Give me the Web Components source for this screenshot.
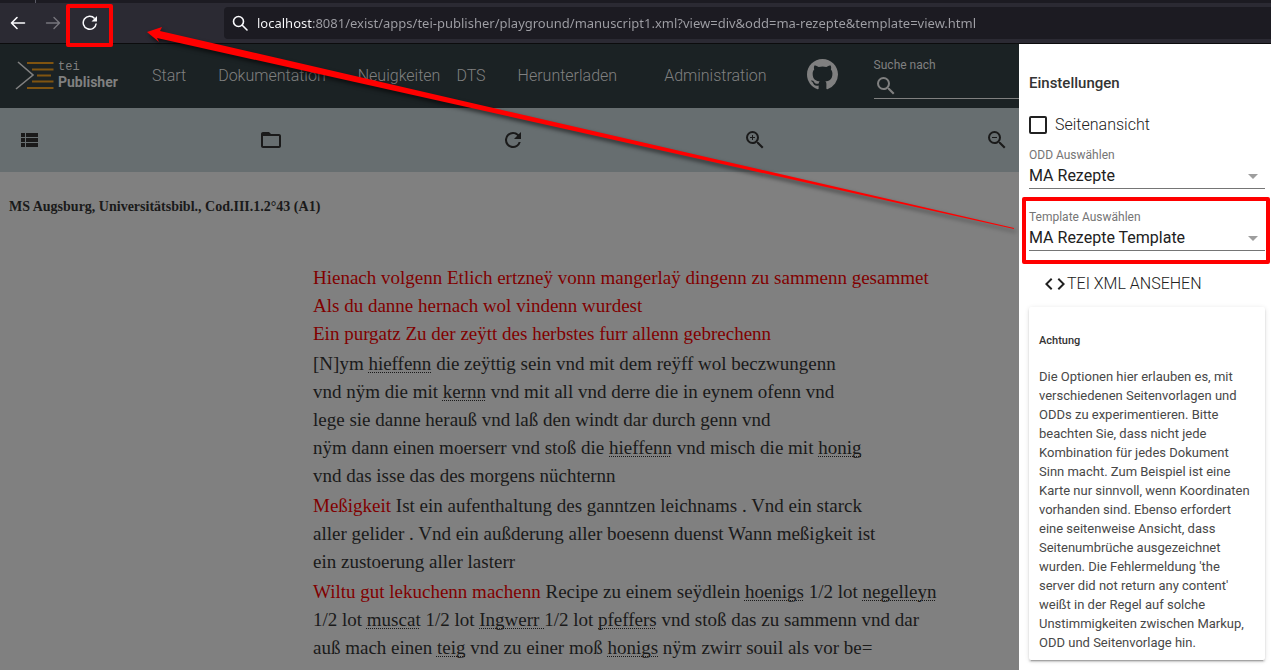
<!DOCTYPE html>
<html lang="de">
<head>
<meta charset="utf-8">
<title>TEI Publisher – MA Rezepte</title>
<style>
html, body { margin: 0; height: 100%; }
body { font: 16px/24px Roboto, sans-serif; background: #808080; overflow: hidden; }
</style>
</head>
<body>
<demo-window></demo-window>

<template id="t-window">
<style>
:host { display: flex; flex-direction: column; height: 100vh; position: relative; overflow: hidden; }
.page { display: flex; flex: 1; min-height: 0; }
main { flex: 1; min-width: 0; background: #808080; overflow: hidden; }
.arrow { position: absolute; left: 0; top: 0; pointer-events: none; filter: drop-shadow(2px 3px 2px rgba(0,0,0,.6)); }
</style>
<browser-bar></browser-bar>
<div class="page">
  <main>
    <app-header></app-header>
    <view-toolbar></view-toolbar>
    <manuscript-view></manuscript-view>
  </main>
  <settings-drawer></settings-drawer>
</div>
<svg class="arrow" width="1024" height="240" aria-hidden="true"><path fill="#f00" d="M147 32 162 27 160 31 1014 228V229L157 38 159 42Z"/></svg>
</template>

<template id="t-browser">
<style>
:host { display: block; background: #2b2a33; border-bottom: 1px solid #0c0c0d; }
.tabs { height: 3px; background: #1c1b22; padding-left: 35px; }
.tabs i { display: block; width: 1px; height: 3px; background: #5b5b66; }
.bar { display: flex; align-items: center; height: 40px; }
button { position: relative; border: 0; padding: 0; background: none; width: 35px; height: 32px; display: grid; place-items: center; color: #fbfbfe; }
button.off { color: #77767d; }
button.reload { margin-left: 2px; }
.mark { position: absolute; inset: -3px -6px -8px -6px; border: 4px solid #f00; border-radius: 2px; z-index: 2; }
.url { flex: 1; display: flex; align-items: center; gap: 9px; height: 32px; margin-left: 117px; padding-left: 8px; background: #1c1b22; border-radius: 4px 0 0 4px; color: #fbfbfe; }
input { flex: 1; border: 0; outline: 0; padding: 0; height: 24px; font: 13px/24px "Noto Sans", sans-serif;
  color: transparent; background: linear-gradient(90deg, #fbfbfe 56px, #a0a0a6 56px); -webkit-background-clip: text; background-clip: text; }
</style>
<div class="tabs"><i></i></div>
<div class="bar">
  <button aria-label="Zurück"><svg width="16" height="16" viewBox="0 0 16 16" fill="none" stroke="currentColor" stroke-width="1.600" stroke-linecap="round" stroke-linejoin="round"><path d="M14.500 8H1.500M7 2.500 1.500 8 7 13.500"/></svg></button>
  <button class="off" aria-label="Vor"><svg width="16" height="16" viewBox="0 0 16 16" fill="none" stroke="currentColor" stroke-width="1.400" stroke-linecap="round" stroke-linejoin="round"><path d="M1.500 8H14.500M9 2.500 14.500 8 9 13.500"/></svg></button>
  <button class="reload" aria-label="Neu laden"><svg width="16" height="16" viewBox="0 0 16 16" fill="none" stroke="currentColor" stroke-width="1.500"><path d="M14.200 8.500A6.500 6.500 0 1 1 12.600 3.400"/><path fill="currentColor" stroke="none" d="M15 1V6.500H9.500Z"/></svg><span class="mark"></span></button>
  <div class="url">
    <svg width="16" height="16" viewBox="0 0 16 16" fill="none" stroke="currentColor" stroke-width="1.600" stroke-linecap="round"><circle cx="6.500" cy="6.500" r="5"/><path d="M10.300 10.300 15 15"/></svg>
    <input aria-label="Adresse" value="localhost:8081/exist/apps/tei-publisher/playground/manuscript1.xml?view=div&amp;odd=ma-rezepte&amp;template=view.html">
  </div>
</div>
</template>

<template id="t-header">
<style>
:host { display: flex; align-items: center; height: 64px; background: #1b2224; color: #808080; padding-left: 15px; white-space: nowrap; }
a { color: inherit; text-decoration: none; }
.logo { display: flex; align-items: center; gap: 4px; width: 121px; }
.logo svg { flex: none; }
.logo b { display: grid; font: 700 14px/18px Roboto, sans-serif; }
.logo small { font: 12px/12px "Liberation Mono", monospace; }
nav { display: flex; font-weight: 300; }
nav a { padding: 0 16px; }
nav a.tight { padding-right: 0; }
nav a.wide { padding-left: 31px; padding-right: 24px; }
.git { display: flex; margin: -3px 20px 0 16px; }
.search { flex: 1; align-self: flex-start; margin: 12px 0 0 16px; border-bottom: 1px solid #808080; min-width: 100px; }
label { display: block; font-size: 12px; line-height: 18px; }
.field { display: flex; height: 24px; align-items: flex-start; }
input { flex: 1; min-width: 0; border: 0; outline: 0; background: none; color: inherit; }
</style>
<a class="logo" href="#"><svg width="39" height="30" viewBox="0 0 39 30" fill="none"><path stroke="#808080" stroke-width="1.600" d="M3 1 18 14 1 28"/><path stroke="#805410" stroke-width="1.800" d="M12 2H38.500M17 8.500H38.500M22 14.500H36M17 20.500H38.500M12 27H38.500"/></svg><b><small>tei</small>Publisher</b></a>
<nav>
  <a href="#">Start</a><a href="#">Dokumentation</a><a class="tight" href="#">Neuigkeiten</a><a href="#">DTS</a><a href="#">Herunterladen</a><a class="wide" href="#">Administration</a>
</nav>
<a class="git" href="#" aria-label="GitHub"><svg width="31" height="31" viewBox="0 0 16 16" fill="#808080"><path d="M8 0C3.580 0 0 3.580 0 8c0 3.540 2.290 6.530 5.470 7.590.4.070.55-.17.55-.38 0-.19-.01-.82-.01-1.490-2.010.37-2.530-.49-2.690-.94-.09-.23-.48-.94-.82-1.130-.28-.15-.68-.52-.01-.53.63-.01 1.080.58 1.230.82.72 1.210 1.870.87 2.330.66.07-.52.28-.87.51-1.070-1.780-.2-3.640-.89-3.640-3.950 0-.87.31-1.590.82-2.150-.08-.2-.36-1.020.08-2.120 0 0 .67-.21 2.200.82a7.400 7.400 0 0 1 4 0c1.530-1.040 2.200-.82 2.200-.82.44 1.100.16 1.920.08 2.120.51.56.82 1.270.82 2.150 0 3.070-1.870 3.750-3.650 3.950.29.25.54.73.54 1.480 0 1.070-.01 1.930-.01 2.200 0 .21.15.46.55.38A8 8 0 0 0 16 8c0-4.420-3.580-8-8-8Z"/></svg></a>
<div class="search">
  <label for="q">Suche nach</label>
  <div class="field"><svg width="24" height="24" viewBox="0 0 24 24" fill="#808080"><path d="M15.500 14h-.79l-.28-.27A6.470 6.470 0 0 0 16 9.500 6.500 6.500 0 1 0 9.500 16c1.610 0 3.090-.59 4.230-1.570l.27.28v.79l5 4.990L20.490 19l-4.990-5zm-6 0C7.010 14 5 11.990 5 9.500S7.010 5 9.500 5 14 7.010 14 9.500 11.990 14 9.500 14z"/></svg><input id="q" type="search"></div>
</div>
</template>

<template id="t-toolbar">
<style>
:host { display: flex; align-items: center; justify-content: space-between; height: 64px; padding: 0 10px 0 17px; background: #676e70; }
button { border: 0; padding: 0; background: none; width: 24px; height: 24px; }
svg { display: block; fill: #1a1a1a; }
</style>
<button aria-label="Inhalt"><svg width="24" height="24"><path d="M4 14h4v-4H4v4zm0 5h4v-4H4v4zM4 9h4V5H4v4zm5 5h12v-4H9v4zm0 5h12v-4H9v4zM9 5v4h12V5H9z"/></svg></button>
<button aria-label="Ordner"><svg width="24" height="24"><path d="M20 6h-8l-2-2H4c-1.100 0-1.990.9-1.990 2L2 18c0 1.100.9 2 2 2h16c1.100 0 2-.9 2-2V8c0-1.100-.9-2-2-2zm0 12H4V8h16v10z"/></svg></button>
<button aria-label="Aktualisieren"><svg width="24" height="24"><path d="M17.650 6.350A7.958 7.958 0 0 0 12 4a8 8 0 1 0 7.730 10h-2.080A5.990 5.990 0 0 1 12 18a6 6 0 1 1 0-12c1.660 0 3.140.69 4.220 1.780L13 11h7V4l-2.350 2.350z"/></svg></button>
<button aria-label="Vergrößern"><svg width="24" height="24"><path d="M15.500 14h-.79l-.28-.27A6.470 6.470 0 0 0 16 9.500 6.500 6.500 0 1 0 9.500 16c1.610 0 3.090-.59 4.230-1.570l.27.28v.79l5 4.990L20.490 19l-4.990-5zm-6 0C7.010 14 5 11.990 5 9.500S7.010 5 9.500 5 14 7.010 14 9.500 11.990 14 9.500 14zm2.500-4h-2v2H9v-2H7V9h2V7h1v2h2v1z"/></svg></button>
<button aria-label="Verkleinern"><svg width="24" height="24"><path d="M15.500 14h-.79l-.28-.27A6.470 6.470 0 0 0 16 9.500 6.500 6.500 0 1 0 9.500 16c1.610 0 3.090-.59 4.230-1.570l.27.28v.79l5 4.990L20.490 19l-4.990-5zm-6 0C7.010 14 5 11.990 5 9.500S7.010 5 9.500 5 14 7.010 14 9.500 11.990 14 9.500 14zM7 9h5v1H7z"/></svg></button>
</template>

<template id="t-manuscript">
<style>
:host { display: block; color: #1a1a1a; font: 19px/28px "Liberation Serif", serif; white-space: nowrap; }
h1 { margin: 0; padding: 25px 9px 0; font-size: 14px; line-height: 20px; font-weight: 700; }
.text { padding: 47px 0 0 313px; display: grid; gap: 2px; }
</style>
<h1>MS Augsburg, Universitätsbibl., Cod.III.1.2°43 (A1)</h1>
<div class="text">
<div>
<ms-line><ms-rubric>Hienach volgenn Etlich ertzneÿ vonn mangerlaÿ dingenn zu sammenn gesammet</ms-rubric></ms-line>
<ms-line><ms-rubric>Als du danne hernach wol vindenn wurdest</ms-rubric></ms-line>
<ms-line><ms-rubric>Ein purgatz Zu der zeÿtt des herbstes furr allenn gebrechenn</ms-rubric></ms-line>
</div>
<div>
<ms-line>[N]ym <ms-term>hieffenn</ms-term> die zeÿttig sein vnd mit dem reÿff wol beczwungenn</ms-line>
<ms-line>vnd nÿm die mit <ms-term>kernn</ms-term> vnd mit all vnd derre die in eynem ofenn vnd</ms-line>
<ms-line>lege sie danne herauß vnd laß den windt dar durch genn vnd</ms-line>
<ms-line>nÿm dann einen moerserr vnd stoß die <ms-term>hieffenn</ms-term> vnd misch die mit <ms-term>honig</ms-term></ms-line>
<ms-line>vnd das isse das des morgens nüchternn</ms-line>
</div>
<div>
<ms-line><ms-rubric>Meßigkeit</ms-rubric> Ist ein aufenthaltung des ganntzen leichnams . Vnd ein starck</ms-line>
<ms-line>aller gelider . Vnd ein außderung aller boesenn duenst Wann meßigkeit ist</ms-line>
<ms-line>ein zustoerung aller lasterr</ms-line>
</div>
<div>
<ms-line><ms-rubric>Wiltu gut lekuchenn machenn</ms-rubric> Recipe zu einem seÿdlein <ms-term>hoenigs</ms-term> 1/2 lot <ms-term>negelleyn</ms-term></ms-line>
<ms-line>1/2 lot <ms-term>muscat</ms-term> 1/2 lot <ms-term>Ingwerr </ms-term>1/2 lot <ms-term>pfeffers</ms-term> vnd stoß das zu sammenn vnd dar</ms-line>
<ms-line>auß mach einen <ms-term>teig</ms-term> vnd zu einer moß <ms-term>honigs</ms-term> nÿm zwirr souil als vor be=</ms-line>
</div>
</div>
</template>

<template id="t-line"><style>:host { display: block; }</style><slot></slot></template>
<template id="t-rubric"><style>:host { color: #800000; }</style><slot></slot></template>
<template id="t-term"><style>:host { text-decoration: underline dotted 1px; text-underline-offset: 2px; text-decoration-skip-ink: none; }</style><slot></slot></template>

<template id="t-drawer">
<style>
:host { display: block; width: 236px; padding: 0 6px 0 10px; background: #fff; color: #212121; }
h2 { margin: 0; padding: 24px 0 0; font: 500 15px/30px Roboto, sans-serif; color: #333; }
.check { display: flex; align-items: center; gap: 8px; margin-top: 15px; height: 24px; font-weight: 300; }
input { appearance: none; margin: 0; width: 18px; height: 18px; border: 2px solid #212121; border-radius: 2px; }
a { display: flex; align-items: center; margin-top: 21px; padding-left: 14px; color: inherit; text-decoration: none; font-weight: 300; }
</style>
<h2>Einstellungen</h2>
<div class="check"><input type="checkbox" id="v"><label for="v">Seitenansicht</label></div>
<drawer-select label="ODD Auswählen" value="MA Rezepte"></drawer-select>
<drawer-select label="Template Auswählen" value="MA Rezepte Template" marked></drawer-select>
<a href="#"><svg width="24" height="24" viewBox="0 0 24 24" fill="#212121"><path d="M9.400 16.600 4.800 12l4.600-4.600L8 6l-6 6 6 6 1.400-1.400zm5.200 0 4.600-4.600-4.600-4.600L16 6l6 6-6 6-1.400-1.400z"/></svg>TEI XML ANSEHEN</a>
<note-card></note-card>
</template>

<template id="t-select">
<style>
:host { display: block; position: relative; padding-top: 9px; }
:host([marked]) { padding-top: 19px; }
label { display: block; font-size: 12px; line-height: 18px; color: #757575; }
.row { display: flex; align-items: center; height: 24px; border-bottom: 1px solid #757575; }
select { appearance: none; flex: 1; border: 0; padding: 0; margin: 0; background: none; font: 16px/24px Roboto, sans-serif; color: #212121; height: 24px; }
svg { margin-right: 7px; }
.mark { display: none; position: absolute; inset: 8px -5px -13px -7px; border: 4px solid #f00; border-radius: 2px; pointer-events: none; }
:host([marked]) .mark { display: block; }
</style>
<label for="s"></label>
<div class="row"><select id="s"></select><svg width="10" height="5" fill="#9e9e9e"><path d="M0 0H10L5 5Z"/></svg></div>
<span class="mark"></span>
</template>

<template id="t-note">
<style>
:host { display: block; margin-top: 11px; padding: 22px 10px 8px; border-radius: 2px; background: #fff; color: #333; box-shadow: 0 2px 2px rgba(0,0,0,.14), 0 1px 5px rgba(0,0,0,.12), 0 3px 1px -2px rgba(0,0,0,.2); }
h3 { margin: 0; font: 500 11px/24px Roboto, sans-serif; }
p { margin: 14px 0 0; font-size: 13px; line-height: 19px; font-weight: 400; color: #484848; }
</style>
<h3>Achtung</h3>
<p>Die Optionen hier erlauben es, mit<br>verschiedenen Seitenvorlagen und<br>ODDs zu experimentieren. Bitte<br>beachten Sie, dass nicht jede<br>Kombination für jedes Dokument<br>Sinn macht. Zum Beispiel ist eine<br>Karte nur sinnvoll, wenn Koordinaten<br>vorhanden sind. Ebenso erfordert<br>eine seitenweise Ansicht, dass<br>Seitenumbrüche ausgezeichnet<br>wurden. Die Fehlermeldung 'the<br>server did not return any content'<br>weißt in der Regel auf solche<br>Unstimmigkeiten zwischen Markup,<br>ODD und Seitenvorlage hin.</p>
</template>

<script>
class Base extends HTMLElement {
  constructor() {
    super();
    const t = document.getElementById(this.constructor.template);
    this.attachShadow({ mode: 'open' }).append(t.content.cloneNode(true));
  }
}
const define = (name, template) => customElements.define(name, class extends Base { static template = template; });
customElements.define('drawer-select', class extends Base {
  static template = 't-select';
  connectedCallback() {
    this.shadowRoot.querySelector('label').textContent = this.getAttribute('label');
    this.shadowRoot.querySelector('select').replaceChildren(new Option(this.getAttribute('value')));
  }
});
define('ms-line', 't-line');
define('ms-rubric', 't-rubric');
define('ms-term', 't-term');
define('note-card', 't-note');
define('settings-drawer', 't-drawer');
define('manuscript-view', 't-manuscript');
define('view-toolbar', 't-toolbar');
define('app-header', 't-header');
define('browser-bar', 't-browser');
define('demo-window', 't-window');
</script>
</body>
</html>
